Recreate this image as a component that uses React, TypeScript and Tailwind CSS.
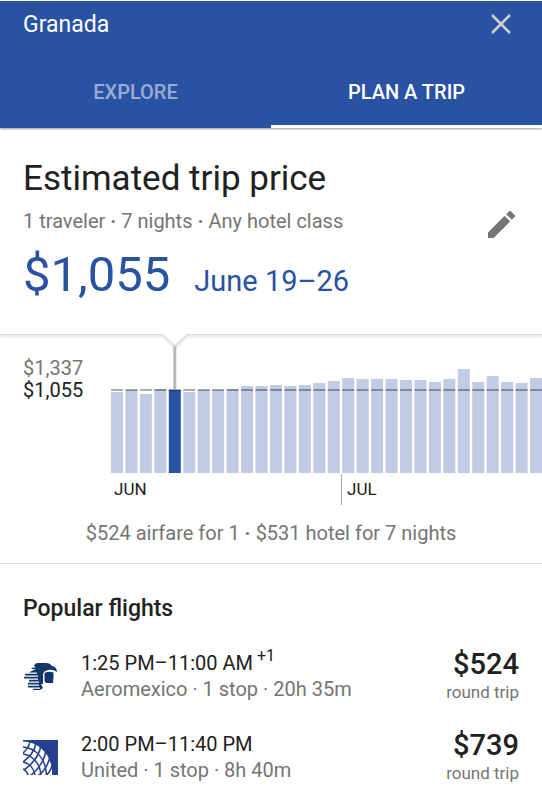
const tops = [392, 390, 394, 389, 390, 392, 390, 390, 389, 386, 386, 385, 386, 385, 383, 381, 378, 379, 379, 379, 380, 380, 382, 379, 369, 382, 376, 382, 383, 378];
const BASELINE = 473;
const PITCH = 14.45;

function PriceChart() {
  return (
    <svg viewBox="111 335 431 138" className="block h-auto w-full overflow-visible" role="img" aria-label="Trip price by departure date">
      {tops.map((top, i) => (
        <rect key={i} x={111 + i * PITCH} y={top} width="12" height={BASELINE - top} fill={i === 4 ? '#2952a3' : '#c1cbe4'} />
      ))}
      <path d="M111 390H542" stroke="#000" strokeOpacity="0.33" strokeWidth="2" strokeDasharray="12 2.45" />
      <path d="M163 337L175 349L187 337" fill="none" stroke="#f1eff1" strokeWidth="2" />
      <path d="M174.8 346V389" stroke="#b8b8b8" strokeWidth="3" />
      <path d="M163 333L163 335L175 346L187 335V333Z" fill="#fff" />
      <path d="M163 335L175 346L187 335" fill="none" stroke="#dedbde" strokeWidth="1.6" />
    </svg>
  );
}

function AeromexicoLogo() {
  return (
    <svg viewBox="0 0 35 35" className="size-[35px]" role="img" aria-label="Aeromexico">
      <path fill="#12356b" d="M11 7Q12 4 15 4H23Q27 4 29 7Q34 8 34 13Q30 10 25 11Q20 12 20 16V25H18L19 27L20 29L17 31H10V29.8H17V28.4H5V26.8H16V25.4H5V23.8H16V22.4H6V20.8H15V19.4H1V17.8H15V16.4H2V14.8H14V13.4H6Q9 12 13 10H8L10 8.5H13Z" />
      <path fill="#12356b" d="M21.5 14Q26 12 30.5 13.5V18L30 24H23L21.5 22Z" />
    </svg>
  );
}

function UnitedLogo() {
  return (
    <svg viewBox="0 0 35 35" className="size-[35px]" role="img" aria-label="United">
      <path fill="#263f8f" d="M0 0H35V35H0Z" />
      <path fill="#fff" d="M0 1.5C17 2 30 16 29 35H0Z" />
      <g fill="none" stroke="#263f8f" strokeWidth="1.5">
        <path d="M0 7C13 8 23 19 23.5 35M0 14C10 15 17 24 18 35M0 22C7 23 11 29 12 35M0 29Q4 31 5 35" />
      </g>
      <g fill="none" stroke="#263f8f" strokeWidth="1.6">
        <path d="M7 1Q6 8 0 13M13 3Q11 14 0 22M18 6Q15 20 1 30M23 11Q20 26 7 36M27 17Q24 29 15 36M29.5 25Q27 32 23 36" />
      </g>
    </svg>
  );
}

const flights = [
  { logo: <AeromexicoLogo />, time: '1:25 PM–11:00 AM', plus: '+1', info: 'Aeromexico · 1 stop · 20h 35m', price: '$524' },
  { logo: <UnitedLogo />, time: '2:00 PM–11:40 PM', plus: '', info: 'United · 1 stop · 8h 40m', price: '$739' },
];

function Dot() {
  return <span className="font-bold"> · </span>;
}

export default function App() {
  return (
    <div className="min-h-screen overflow-hidden bg-white pt-px font-['Roboto',sans-serif] text-[#212121]">
      <header className="relative bg-[#2952a3] shadow-[0_1px_2px_rgba(0,0,0,0.4)]">
        <div className="flex h-[55px] items-start justify-between pr-[29px] pl-[23px]">
          <h1 className="pt-[9px] text-[23px] leading-[30px] text-white">Granada</h1>
          <button type="button" aria-label="Close" className="mt-[11px] p-0.5">
            <svg viewBox="0 0 20 20" className="size-5" fill="none" stroke="#d2d0d0" strokeWidth="2.6"><path d="M1 1L19 19M19 1L1 19" /></svg>
          </button>
        </div>
        <nav role="tablist" className="grid grid-cols-2 text-[20px] font-medium">
          <button type="button" role="tab" aria-selected="false" className="h-[72px] border-b-3 border-transparent pt-0.5 text-[#9bacd4]">EXPLORE</button>
          <button type="button" role="tab" aria-selected="true" className="h-[72px] border-b-3 border-white pt-0.5 text-white">PLAN A TRIP</button>
        </nav>
      </header>

      <main>
        <section className="flex h-[207px] items-start justify-between border-b border-[#dcdadc] pt-7 pr-[27px] pl-[23px] shadow-[0_2px_3px_rgba(0,0,0,0.1)]">
          <div>
            <h2 className="text-[35px] leading-[46px]">Estimated trip price</h2>
            <p className="pt-[3px] text-[20px] leading-8 text-[#757575]">1 traveler<Dot />7 nights<Dot />Any hotel class</p>
            <p className="flex items-baseline gap-6 text-[#2952a3]">
              <span className="text-[49px] leading-[76px]">$1,055</span>
              <span className="text-[29px]">June 19–26</span>
            </p>
          </div>
          <button type="button" aria-label="Edit trip" className="mt-[55px]">
            <svg viewBox="3 3 18 18" className="size-[27px]" fill="#757575"><path d="M3 17.25V21h3.75L17.81 9.94l-3.75-3.75L3 17.25zM20.71 7.04a1 1 0 0 0 0-1.41l-2.34-2.34a1 1 0 0 0-1.41 0l-1.83 1.83 3.75 3.75 1.83-1.83z" /></svg>
          </button>
        </section>

        <section className="border-b border-[#dcdcdc]">
          <div className="flex">
            <div className="w-[111px] shrink-0 pt-[22px] pl-[23px] text-[20px] leading-[22px]">
              <p className="text-[#757575]">$1,337</p>
              <p>$1,055</p>
            </div>
            <div className="min-w-0 flex-1">
              <PriceChart />
              <div className="grid h-[30px] grid-cols-[230px_1fr] text-[17px] leading-8">
                <span className="pl-[3px]">JUN</span>
                <span className="mt-px border-l border-[#aaa] pl-[5px] leading-[30px]">JUL</span>
              </div>
            </div>
          </div>
          <p className="pt-[14px] pb-[14px] text-center text-[20px] leading-8 text-[#757575]">$524 airfare for 1<Dot />$531 hotel for 7 nights</p>
        </section>

        <section className="px-[23px] pt-[29px]">
          <h3 className="text-[23px] leading-8 font-medium">Popular flights</h3>
          <ul className="pt-[25px]">
            {flights.map((f) => (
              <li key={f.time} className="flex h-[81px] items-start">
                <div className="w-[58px] shrink-0 pt-[9px]">{f.logo}</div>
                <div className="flex-1 text-[20px] leading-[26px]">
                  <p className="flex">{f.time}<span className="pl-1 text-[16px] leading-3">{f.plus}</span></p>
                  <p className="text-[#757575]">{f.info}</p>
                </div>
                <div className="text-right">
                  <p className="text-[29px] leading-[28px] font-medium">{f.price}</p>
                  <p className="text-[17px] leading-[28px] text-[#757575]">round trip</p>
                </div>
              </li>
            ))}
          </ul>
        </section>
      </main>
    </div>
  );
}
